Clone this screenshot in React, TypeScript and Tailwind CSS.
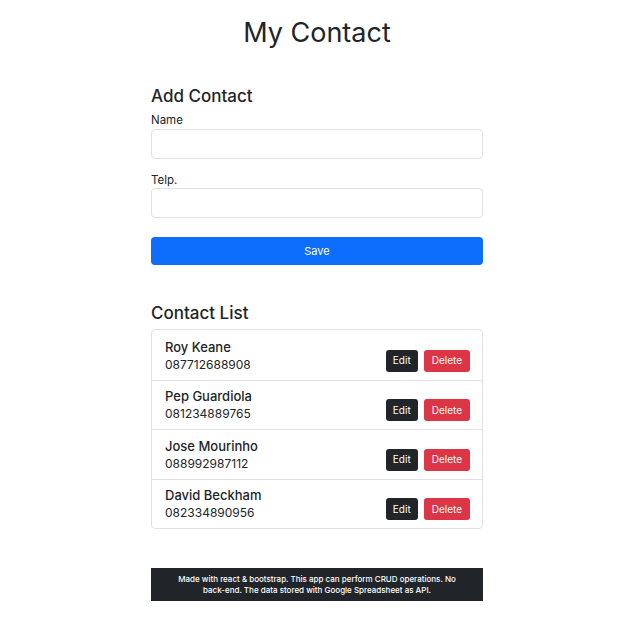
import React from 'react';

const contacts = [
  { name: 'Roy Keane', phone: '087712688908' },
  { name: 'Pep Guardiola', phone: '081234889765' },
  { name: 'Jose Mourinho', phone: '088992987112' },
  { name: 'David Beckham', phone: '082334890956' },
];

function App() {
  return (
    <div className="min-h-screen bg-white text-[#212529] font-['Inter',sans-serif] flex justify-center pr-[6px]">
      <div className="w-[332px] pt-[16px]">
        <h1 className="text-center text-[27px] leading-[34px] font-normal">My Contact</h1>

        <h2 className="mt-[35px] text-[17px] leading-[22px] font-medium">Add Contact</h2>
        <label className="block mt-[6px] text-[11.5px] leading-[14px]">Name</label>
        <input className="block mt-[2px] w-full h-[30px] border border-[#dee2e6] rounded-[4px]" />
        <label className="block mt-[14px] text-[11.5px] leading-[14px]">Telp.</label>
        <input className="block mt-[1px] w-full h-[30px] border border-[#dee2e6] rounded-[4px]" />
        <button className="block mt-[19px] w-full h-[28px] bg-[#0d6efd] text-white text-[11px] rounded-[4px]">
          Save
        </button>

        <h2 className="mt-[37px] text-[17px] leading-[22px] font-medium">Contact List</h2>
        <ul className="mt-[5px] border border-[#dee2e6] rounded-[4px]">
          {contacts.map((c, i) => (
            <li
              key={c.name}
              className={`flex items-end justify-between pl-[13px] pr-[12px] pt-[8px] pb-[7px] h-[49.5px] ${
                i > 0 ? 'border-t border-[#dee2e6]' : ''
              }`}
            >
              <div>
                <div className="text-[13px] leading-[18px] font-medium">{c.name}</div>
                <div className="text-[12px] leading-[17px]">{c.phone}</div>
              </div>
              <div className="flex gap-[6px] mb-[1px]">
                <button className="h-[22px] px-[7px] bg-[#212529] text-white text-[10px] rounded-[3px]">Edit</button>
                <button className="h-[22px] px-[8px] bg-[#dc3545] text-white text-[10px] rounded-[3px]">Delete</button>
              </div>
            </li>
          ))}
        </ul>

        <footer className="mt-[39px] h-[33px] bg-[#212529] text-white text-[8px] leading-[11px] font-medium flex items-center justify-center text-center px-[18px]">
          Made with react &amp; bootstrap. This app can perform CRUD operations. No back-end. The data stored with Google Spreadsheet as API.
        </footer>
      </div>
    </div>
  );
}

export default App;
